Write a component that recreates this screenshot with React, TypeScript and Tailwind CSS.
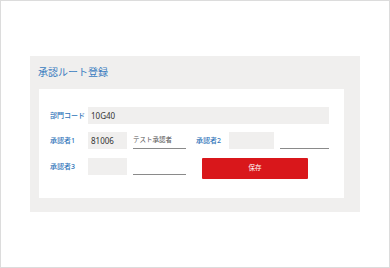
import React from "react";

const font = "font-['Noto_Sans','Noto_Sans_CJK_JP',sans-serif]";

function Label({ text, width }: { text: string; width: string }) {
    return <span className={`${width} shrink-0 text-[7px] font-medium text-[#2f74b9] leading-none`}>{text}</span>;
}

function Box({ value, width }: { value?: string; width: string }) {
    return (
        <div className={`${width} h-[17px] shrink-0 bg-[#f0efee] flex items-center pl-[3px] text-[8px] text-[#333] leading-none`}>
            {value}
        </div>
    );
}

function Line({ value, width }: { value?: string; width: string }) {
    return (
        <div className={`${width} h-[17px] shrink-0 border-b border-[#8a8a8a] flex items-center text-[6.5px] text-[#555] leading-none`}>
            {value}
        </div>
    );
}

export default function App() {
    return (
        <div className={`${font} w-[390px] h-[268px] bg-white border border-[#dcdcdc] pl-[29px] pt-[55px]`}>
            <div className="w-[330px] h-[156px] bg-[#f0efee] pl-[9px] pt-[10px]">
                <h1 className="text-[10px] leading-[12px] text-[#3b7dc0] ml-[-1px]">承認ルート登録</h1>
                <div className="mt-[11px] w-[305px] h-[109px] bg-white pt-[18px] pl-[11px] flex flex-col gap-[8px]">
                    <div className="flex items-center">
                        <Label text="部門コード" width="w-[38px]" />
                        <Box value="10G40" width="w-[241px]" />
                    </div>
                    <div className="flex items-center">
                        <Label text="承認者1" width="w-[38px]" />
                        <Box value="81006" width="w-[39px]" />
                        <div className="w-[6px]" />
                        <Line value="テスト承認者" width="w-[53px]" />
                        <div className="w-[10px]" />
                        <Label text="承認者2" width="w-[33px]" />
                        <Box width="w-[45px]" />
                        <div className="w-[6px]" />
                        <Line width="w-[49px]" />
                    </div>
                    <div className="flex items-start mt-[1px]">
                        <div className="h-[17px] flex items-center">
                            <Label text="承認者3" width="w-[38px]" />
                        </div>
                        <Box width="w-[39px]" />
                        <div className="w-[6px]" />
                        <Line width="w-[53px]" />
                        <div className="w-[16px]" />
                        <button className="w-[106px] h-[21px] bg-[#d9171b] rounded-[1px] text-white text-[6.5px] leading-none flex items-center justify-center">
                            保存
                        </button>
                    </div>
                </div>
            </div>
        </div>
    );
}
